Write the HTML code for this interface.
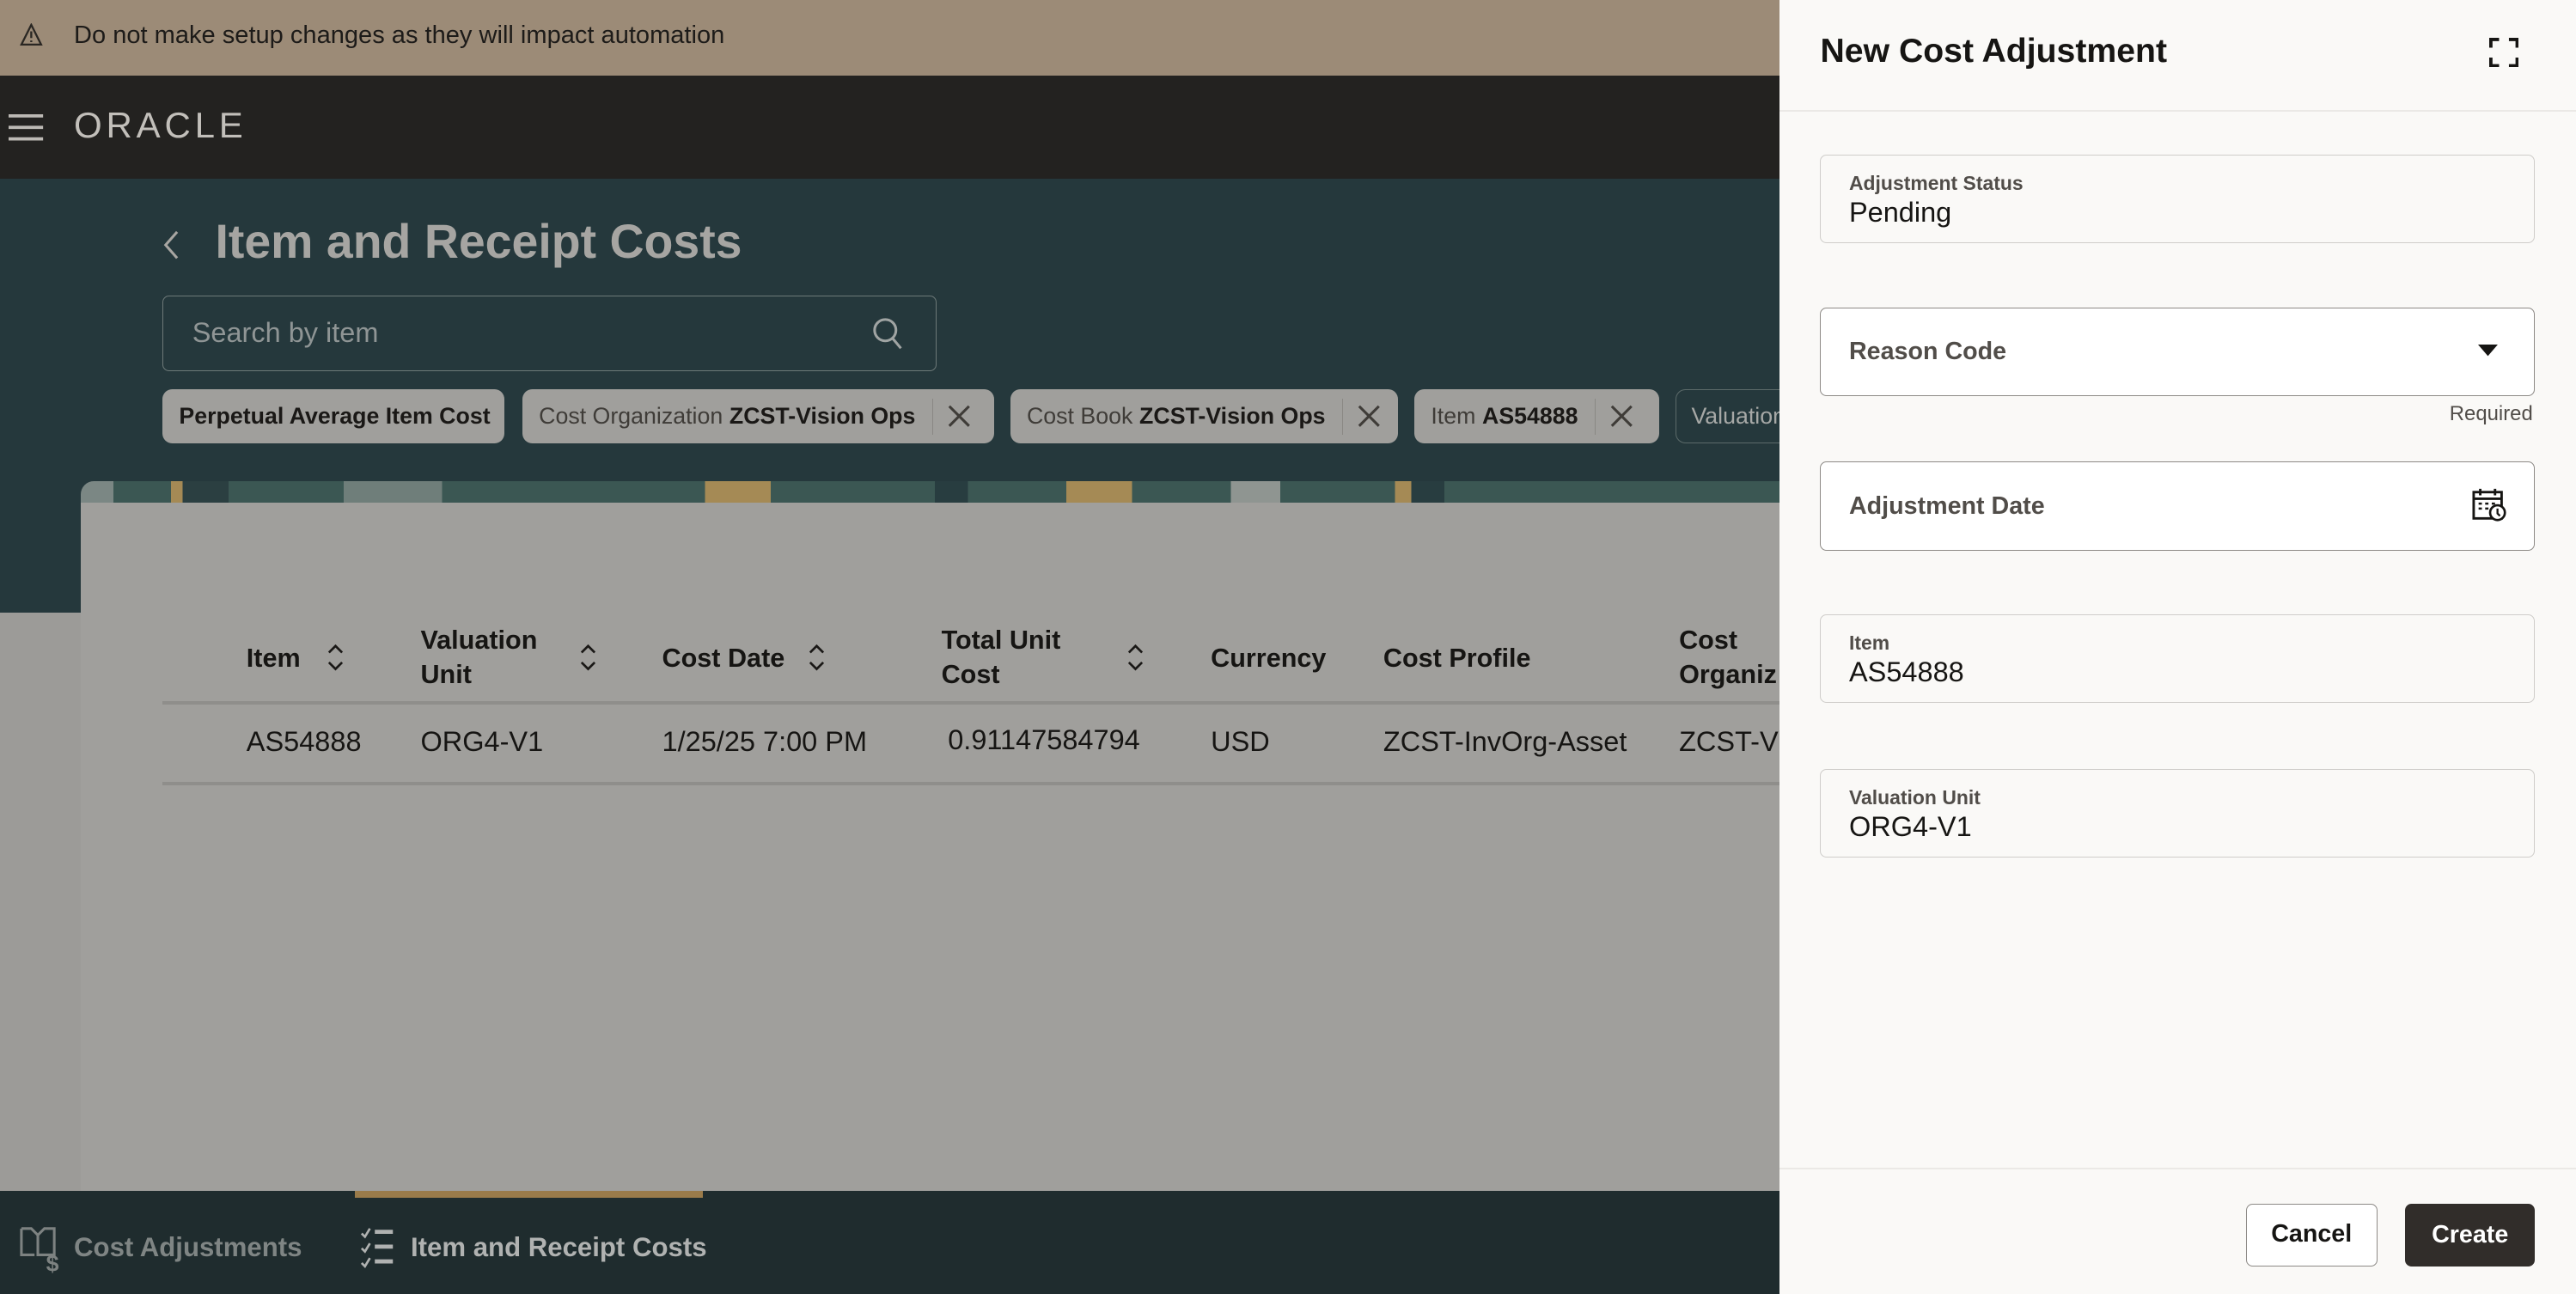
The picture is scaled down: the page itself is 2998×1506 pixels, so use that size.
<!DOCTYPE html>
<html><head><meta charset="utf-8">
<style>
*{box-sizing:border-box;margin:0;padding:0}
html,body{width:2998px;height:1506px;overflow:hidden;background:#9d9c99}
#r{zoom:1.912;width:1568px;height:788px;position:relative;font-family:"Liberation Sans",sans-serif;overflow:hidden}
.a{position:absolute}
.chip{position:absolute;top:237px;height:33px;background:#a09f9c;border-radius:6px;font-size:14px;color:#3f3c38;display:flex;align-items:center;padding:0 10px;white-space:nowrap}
.chip b{color:#1a1816;margin-left:4px}
.chip .x{margin-left:10px;padding-left:8px;border-left:1px solid #8a8884;height:22px;display:flex;align-items:center}
.th{position:absolute;font-size:16px;font-weight:bold;color:#161513;line-height:21px}
.td{position:absolute;top:442px;font-size:17px;color:#161513}
.sort{position:absolute;top:391px}
.fld{position:absolute;left:1108px;width:435px;height:54px;border-radius:4px}
.ro{border:1px solid #cfcdca;background:#faf9f7}
.ed{border:1px solid #8d8a86;background:#fff}
.lbl{position:absolute;left:17px;top:10px;font-size:12px;color:#514d49;font-weight:bold}
.val{position:absolute;left:17px;top:25px;font-size:17px;color:#161513}
.ph{position:absolute;left:17px;top:18px;font-size:15px;color:#514d49;font-weight:bold}
</style></head><body><div id="r">
<div class="a" style="left:0;top:0;width:1083px;height:46px;background:#9c8b77"></div>
<svg class="a" style="left:12px;top:14px" width="14" height="14" viewBox="0 0 14 14"><path d="M7 1L13 13H1Z" fill="none" stroke="#2a2723" stroke-width="1.2"/><path d="M7 5v4M7 10.5v1" stroke="#2a2723" stroke-width="1.2"/></svg>
<div class="a" style="left:45px;top:13px;font-size:15.2px;color:#1d1b19">Do not make setup changes as they will impact automation</div>
<div class="a" style="left:0;top:46px;width:1083px;height:63px;background:#232220"></div>
<svg class="a" style="left:5px;top:69px" width="22" height="17"><path d="M0 1.5h21M0 8.5h21M0 15.5h21" stroke="#bdbab5" stroke-width="2"/></svg>
<div class="a" style="left:45px;top:64px;font-size:22px;color:#c2bfba;letter-spacing:2.5px">ORACLE</div>
<div class="a" style="left:0;top:109px;width:1083px;height:264px;background:#25383c"></div>
<div class="a" style="left:0;top:373px;width:49px;height:352px;background:#9c9b98"></div>
<svg class="a" style="left:98px;top:139px" width="12" height="20"><path d="M10 2L3 10l7 8" fill="none" stroke="#a8a6a2" stroke-width="1.6"/></svg>
<div class="a" style="left:131px;top:130px;font-size:29px;font-weight:bold;color:#a6a5a2">Item and Receipt Costs</div>
<div class="a" style="left:99px;top:180px;width:471px;height:46px;border:1px solid #6d7978;border-radius:4px"></div>
<div class="a" style="left:117px;top:193px;font-size:17px;color:#8f9595">Search by item</div>
<svg class="a" style="left:531px;top:193px" width="20" height="22"><circle cx="8" cy="8" r="6.5" fill="none" stroke="#a0a4a3" stroke-width="1.6"/><path d="M12.5 13l5 6" stroke="#a0a4a3" stroke-width="1.6"/></svg>
<div class="chip" style="left:99px;width:208px;font-weight:bold;color:#1a1816">Perpetual Average Item Cost</div>
<div class="chip" style="left:318px;width:287px">Cost Organization<b>ZCST-Vision Ops</b><span class="x"><svg width="16" height="16"><path d="M2 2l12 12M14 2L2 14" stroke="#3f3c38" stroke-width="1.6"/></svg></span></div>
<div class="chip" style="left:615px;width:236px">Cost Book<b>ZCST-Vision Ops</b><span class="x"><svg width="16" height="16"><path d="M2 2l12 12M14 2L2 14" stroke="#3f3c38" stroke-width="1.6"/></svg></span></div>
<div class="chip" style="left:861px;width:149px">Item<b>AS54888</b><span class="x"><svg width="16" height="16"><path d="M2 2l12 12M14 2L2 14" stroke="#3f3c38" stroke-width="1.6"/></svg></span></div>
<div class="a" style="left:1020px;top:237px;width:80px;height:33px;border:1px solid #5c6b6a;border-radius:6px;font-size:14px;color:#a6a8a6;padding:8px 0 0 9px">Valuation</div>
<div class="a" style="left:49px;top:293px;width:1034px;height:20px;border-radius:8px 0 0 0;background:linear-gradient(90deg,#7b8784 0 20px,#3b5753 20px 55px,#a58a55 55px 62px,#2b3f41 62px 90px,#3b5753 90px 160px,#6f7e7a 160px 220px,#3b5753 220px 380px,#a58a55 380px 420px,#3b5753 420px 520px,#283d40 520px 540px,#3b5753 540px 600px,#a58a55 600px 640px,#3b5753 640px 700px,#8f9591 700px 730px,#3b5753 730px 800px,#a58a55 800px 810px,#283d40 810px 830px,#3b5753 830px 1034px)"></div>
<div class="a" style="left:49px;top:306px;width:1034px;height:419px;background:#a09f9c"></div>
<div class="th" style="left:150px;top:390px">Item</div>
<div class="th" style="left:256px;top:379px">Valuation<br>Unit</div>
<div class="th" style="left:403px;top:390px">Cost Date</div>
<div class="th" style="left:573px;top:379px">Total Unit<br>Cost</div>
<div class="th" style="left:737px;top:390px">Currency</div>
<div class="th" style="left:842px;top:390px">Cost Profile</div>
<div class="th" style="left:1022px;top:379px">Cost<br>Organiz</div>
<svg class="sort" style="left:198px" width="12" height="18"><path d="M2 6l4-4 4 4M2 12l4 4 4-4" fill="none" stroke="#1a1816" stroke-width="1.4"/></svg>
<svg class="sort" style="left:352px" width="12" height="18"><path d="M2 6l4-4 4 4M2 12l4 4 4-4" fill="none" stroke="#1a1816" stroke-width="1.4"/></svg>
<svg class="sort" style="left:491px" width="12" height="18"><path d="M2 6l4-4 4 4M2 12l4 4 4-4" fill="none" stroke="#1a1816" stroke-width="1.4"/></svg>
<svg class="sort" style="left:685px" width="12" height="18"><path d="M2 6l4-4 4 4M2 12l4 4 4-4" fill="none" stroke="#1a1816" stroke-width="1.4"/></svg>
<div class="a" style="left:99px;top:427px;width:984px;height:2px;background:#8f8e8b"></div>
<div class="td" style="left:150px">AS54888</div>
<div class="td" style="left:256px">ORG4-V1</div>
<div class="td" style="left:403px">1/25/25 7:00 PM</div>
<div class="td" style="left:577px;top:441px">0.91147584794</div>
<div class="td" style="left:737px">USD</div>
<div class="td" style="left:842px">ZCST-InvOrg-Asset</div>
<div class="td" style="left:1022px">ZCST-Vi</div>
<div class="a" style="left:99px;top:476px;width:984px;height:2px;background:#8f8e8b"></div>
<div class="a" style="left:0;top:725px;width:1083px;height:63px;background:#1f2c2e"></div>
<div class="a" style="left:216px;top:725px;width:212px;height:4px;background:#9a7b4a"></div>
<svg class="a" style="left:12px;top:746px" width="26" height="30"><path d="M1 2h6l4 4 4-4h6v16H11V6M1 2v16h8" fill="none" stroke="#7d8281" stroke-width="1.6"/><text x="16" y="28" font-size="14" font-weight="bold" fill="#7d8281" font-family="Liberation Sans">$</text></svg>
<div class="a" style="left:45px;top:750px;font-size:16.3px;font-weight:bold;color:#7f8584">Cost Adjustments</div>
<svg class="a" style="left:219px;top:746px" width="24" height="28"><path d="M1 5l2 2 3-5M1 14l2 2 3-5M1 23l2 2 3-5" fill="none" stroke="#b0b2b1" stroke-width="1.4"/><path d="M9 4h11M9 13h11M9 22h11" stroke="#b0b2b1" stroke-width="2.5"/></svg>
<div class="a" style="left:250px;top:750px;font-size:16.3px;font-weight:bold;color:#b0b2b1">Item and Receipt Costs</div>
<div class="a" style="left:1083px;top:0;width:485px;height:788px;background:#faf9f7"></div>
<div class="a" style="left:1108px;top:20px;font-size:20.5px;font-weight:bold;color:#161513">New Cost Adjustment</div>
<svg class="a" style="left:1515px;top:23px" width="18" height="18"><path d="M1 6V1h5M12 1h5v5M17 12v5h-5M6 17H1v-5" fill="none" stroke="#161513" stroke-width="2"/></svg>
<div class="a" style="left:1083px;top:67px;width:485px;height:1px;background:#ebe9e6"></div>
<div class="fld ro" style="top:94px"><div class="lbl">Adjustment Status</div><div class="val">Pending</div></div>
<div class="fld ed" style="top:187px"><div class="ph">Reason Code</div><svg class="a" style="left:400px;top:22px" width="12" height="8"><path d="M0 0h12L6 7z" fill="#161513"/></svg></div>
<div class="a" style="left:1491px;top:245px;font-size:12.5px;color:#514d49">Required</div>
<div class="fld ed" style="top:281px"><div class="ph">Adjustment Date</div><svg class="a" style="left:396px;top:15px" width="22" height="22"><rect x="1" y="3" width="17" height="16" fill="none" stroke="#161513" stroke-width="1.5"/><path d="M1 7h17M5 1v4M14 1v4" stroke="#161513" stroke-width="1.5"/><path d="M4 10h2M8 10h2M12 10h2M4 13h2M8 13h2" stroke="#161513" stroke-width="1.3"/><circle cx="15.5" cy="15.5" r="4.5" fill="#fff" stroke="#161513" stroke-width="1.4"/><path d="M15.5 13v3l1.5 1.5" fill="none" stroke="#161513" stroke-width="1.2"/></svg></div>
<div class="fld ro" style="top:374px"><div class="lbl">Item</div><div class="val">AS54888</div></div>
<div class="fld ro" style="top:468px"><div class="lbl">Valuation Unit</div><div class="val">ORG4-V1</div></div>
<div class="a" style="left:1083px;top:711px;width:485px;height:1px;background:#ebe9e6"></div>
<div class="a" style="left:1367px;top:733px;width:80px;height:38px;border:1px solid #8d8a86;border-radius:4px;background:#fff;font-size:15px;font-weight:bold;color:#161513;text-align:center;line-height:36px">Cancel</div>
<div class="a" style="left:1464px;top:733px;width:79px;height:38px;border-radius:4px;background:#312d2a;font-size:15px;font-weight:bold;color:#fff;text-align:center;line-height:38px">Create</div>
</div></body></html>
